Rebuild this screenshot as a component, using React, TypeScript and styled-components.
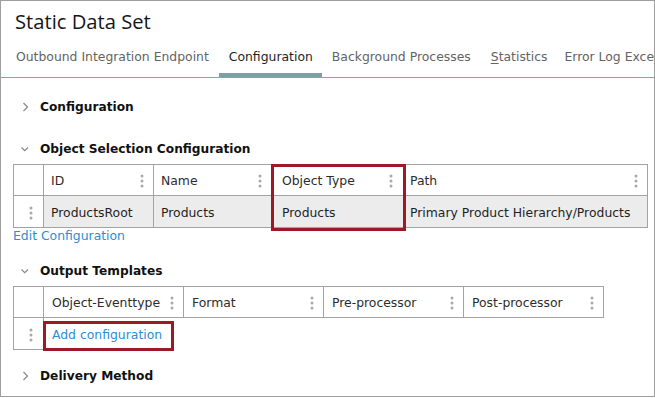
import React from "react";
import styled, { createGlobalStyle } from "styled-components";

const GlobalStyle = createGlobalStyle`
  html, body { margin: 0; padding: 0; background: #ffffff; }
  body { font-family: "DejaVu Sans", Verdana, sans-serif; font-size: 12.4px; color: #222222; }
`;

const Frame = styled.div`
  box-sizing: border-box;
  width: 655px;
  height: 397px;
  border: 1px solid #9e9e9e;
  overflow: hidden;
  background: #ffffff;
`;

const Title = styled.h1`
  margin: 0;
  padding: 8px 0 0 14px;
  font-family: "Open Sans", "Noto Sans", sans-serif;
  font-weight: 400;
  font-size: 20.2px;
  line-height: 24px;
  color: #161616;
`;

const TabBar = styled.nav`
  display: flex;
  padding-left: 5px;
  border-bottom: 1px solid #84a5aa;
  white-space: nowrap;
`;

const Tab = styled.div<{ $active?: boolean; $pr?: number }>`
  flex: none;
  padding: 16px ${(p) => p.$pr ?? 10}px 8px 10px;
  line-height: 16px;
  color: ${(p) => (p.$active ? "#1e1e1e" : "#636363")};
  border-bottom: 4px solid ${(p) => (p.$active ? "#7e9fa4" : "transparent")};
  u { text-decoration-thickness: 1px; text-underline-offset: 2px; }
`;

const SectionHeader = styled.div<{ $gap: number }>`
  display: flex;
  align-items: center;
  gap: 8px;
  margin-top: ${(p) => p.$gap}px;
  padding-left: 19px;
  font-weight: 700;
  font-size: 12.2px;
  line-height: 16px;
  color: #111111;
  svg { flex: none; }
`;

const TableWrap = styled.div`
  position: relative;
  margin: 7px 0 0 12px;
`;

const Grid = styled.div<{ $cols: string }>`
  display: grid;
  grid-template-columns: ${(p) => p.$cols};
  grid-template-rows: 32px 32px;
`;

const Cell = styled.div<{
  $head?: boolean;
  $first?: boolean;
  $shade?: boolean;
  $bare?: boolean;
  $pl?: number;
  $pr?: number;
}>`
  display: flex;
  align-items: center;
  justify-content: space-between;
  box-sizing: border-box;
  min-width: 0;
  padding: 2px ${(p) => p.$pr ?? 9}px 0 ${(p) => p.$pl ?? 7}px;
  white-space: nowrap;
  line-height: 16px;
  color: ${(p) => (p.$head ? "#2c2c2c" : "#1f1f1f")};
  background: ${(p) => (p.$shade ? "#ececec" : "#ffffff")};
  border-right: ${(p) => (p.$bare ? "none" : "1px solid #a3a3a3")};
  border-bottom: ${(p) => (p.$bare ? "none" : "1px solid #a3a3a3")};
  border-top: ${(p) => (p.$head ? "1px solid #a3a3a3" : "none")};
  border-left: ${(p) => (p.$first ? "1px solid #a3a3a3" : "none")};
`;

const HandleCell = styled(Cell)`
  justify-content: flex-start;
  padding-left: 15px;
`;

const Highlight = styled.div<{ $left: number; $top: number; $w: number; $h: number }>`
  position: absolute;
  left: ${(p) => p.$left}px;
  top: ${(p) => p.$top}px;
  width: ${(p) => p.$w}px;
  height: ${(p) => p.$h}px;
  box-sizing: border-box;
  border: 3px solid #9a1b24;
  pointer-events: none;
`;

const Link = styled.a`
  color: #2a8ed5;
  text-decoration: none;
  line-height: 16px;
  cursor: pointer;
`;

const EditLink = styled(Link)`
  display: block;
  margin-left: 12px;
`;

const Kebab = () => (
  <svg width="4" height="14" viewBox="0 0 4 14" aria-hidden="true">
    <circle cx="2" cy="2" r="1.5" fill="#a9a9a9" />
    <circle cx="2" cy="7" r="1.5" fill="#a9a9a9" />
    <circle cx="2" cy="12" r="1.5" fill="#a9a9a9" />
  </svg>
);

const Chevron = ({ open }: { open?: boolean }) => (
  <svg width="12" height="12" viewBox="0 0 12 12" aria-hidden="true">
    <path
      d={open ? "M1.5 4.5 L4.75 7.75 L8 4.5" : "M3.5 2 L7.5 6 L3.5 10"}
      fill="none"
      stroke="#8a8a8a"
      strokeWidth="1.2"
    />
  </svg>
);

const tabs = [
  { label: "Outbound Integration Endpoint" },
  { label: "Configuration", active: true, pr: 9 },
  { label: "Background Processes", pr: 10 },
  { label: "Statistics", underline: true, pr: 7 },
  { label: "Error Log Exceptions" },
];

const selCols = [
  { label: "ID", value: "ProductsRoot" },
  { label: "Name", value: "Products" },
  { label: "Object Type", value: "Products", pl: 10, pr: 12 },
  { label: "Path", value: "Primary Product Hierarchy/Products", pl: 4 },
];

const outCols = ["Object-Eventtype", "Format", "Pre-processor", "Post-processor"];

export default function App() {
  return (
    <>
      <GlobalStyle />
      <Frame>
        <Title>Static Data Set</Title>
        <TabBar>
          {tabs.map((t) => (
            <Tab key={t.label} $active={t.active} $pr={t.pr}>
              {t.underline ? (
                <>
                  <u>S</u>
                  {t.label.slice(1)}
                </>
              ) : (
                t.label
              )}
            </Tab>
          ))}
        </TabBar>

        <SectionHeader $gap={21}>
          <Chevron />
          Configuration
        </SectionHeader>

        <SectionHeader $gap={26}>
          <Chevron open />
          Object Selection Configuration
        </SectionHeader>
        <TableWrap>
          <Grid $cols="31px 110px 118px 134px 242px">
            <Cell $head $first />
            {selCols.map((c) => (
              <Cell key={c.label} $head $pl={c.pl} $pr={c.pr}>
                <span>{c.label}</span>
                <Kebab />
              </Cell>
            ))}
            <HandleCell $first>
              <Kebab />
            </HandleCell>
            {selCols.map((c) => (
              <Cell key={c.label} $shade $pl={c.pl}>
                {c.value}
              </Cell>
            ))}
          </Grid>
          <Highlight $left={258} $top={0} $w={135} $h={67} />
        </TableWrap>
        <EditLink>Edit Configuration</EditLink>

        <SectionHeader $gap={19}>
          <Chevron open />
          Output Templates
        </SectionHeader>
        <TableWrap>
          <Grid $cols="31px 140px 140px 140px 140px">
            <Cell $head $first />
            {outCols.map((c) => (
              <Cell key={c} $head $pl={8}>
                <span>{c}</span>
                <Kebab />
              </Cell>
            ))}
            <HandleCell $first>
              <Kebab />
            </HandleCell>
            <Cell $bare $pl={8}>
              <Link>Add configuration</Link>
            </Cell>
          </Grid>
          <Highlight $left={30} $top={35} $w={131} $h={30} />
        </TableWrap>

        <SectionHeader $gap={18}>
          <Chevron />
          Delivery Method
        </SectionHeader>
      </Frame>
    </>
  );
}
